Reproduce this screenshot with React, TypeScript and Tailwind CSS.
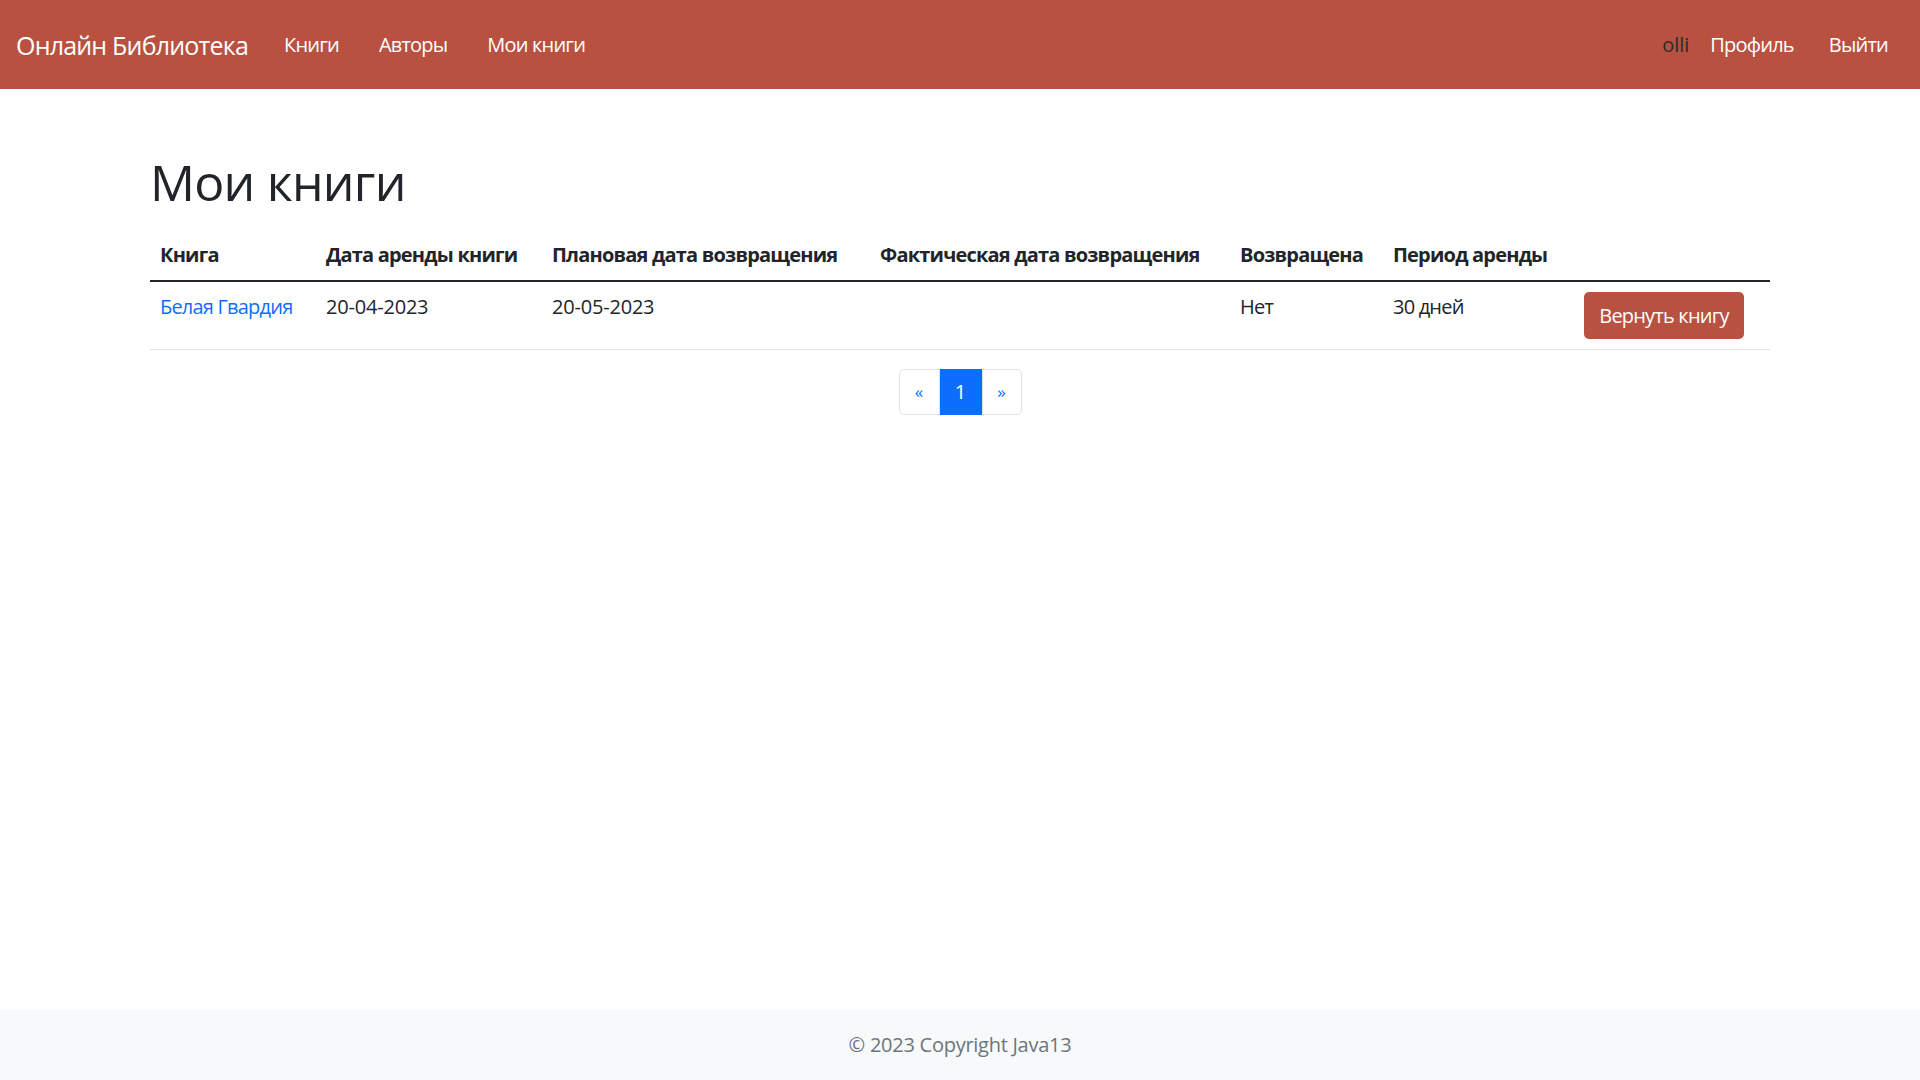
import React from 'react'

const navLinks = ['Книги', 'Авторы', 'Мои книги']

const rows = [
  {
    title: 'Белая Гвардия',
    rentDate: '20-04-2023',
    planned: '20-05-2023',
    actual: '',
    returned: 'Нет',
    period: '30 дней',
  },
]

const App: React.FC = () => {
  return (
    <div className="min-h-screen flex flex-col bg-white text-[#212529] font-['Open_Sans',sans-serif] text-[20px] tracking-[-0.04em]">
      <nav className="h-[89px] bg-[#b85140] flex items-center pl-[16px] pr-[32px]">
        <a href="#" className="text-[25px] text-white mr-[16px] leading-[36px]">
          Онлайн Библиотека
        </a>
        <ul className="flex items-center">
          {navLinks.map((l) => (
            <li key={l}>
              <a href="#" className="block px-[20px] py-[8px] text-white">
                {l}
              </a>
            </li>
          ))}
        </ul>
        <div className="ml-auto flex items-center">
          <span className="text-[#2b2b2b] mr-[21px] tracking-normal">olli</span>
          <a href="#" className="text-white mr-[35px]">
            Профиль
          </a>
          <a href="#" className="text-white">
            Выйти
          </a>
        </div>
      </nav>

      <main className="flex-1">
        <div className="w-[1620px] mx-auto">
          <h1 className="mt-[63px] text-[50px] leading-[60px] font-medium tracking-[-0.015em]">Мои книги</h1>
          <table className="mt-[18px] w-full border-collapse align-top whitespace-nowrap">
            <thead>
              <tr className="border-b-2 border-[#212529]">
                <th className="w-[166px] p-[10px] text-left font-bold leading-[30px]">Книга</th>
                <th className="w-[226px] p-[10px] text-left font-bold leading-[30px]">Дата аренды книги</th>
                <th className="w-[328px] p-[10px] text-left font-bold leading-[30px]">Плановая дата возвращения</th>
                <th className="w-[360px] p-[10px] text-left font-bold leading-[30px]">Фактическая дата возвращения</th>
                <th className="w-[153px] p-[10px] text-left font-bold leading-[30px]">Возвращена</th>
                <th className="w-[191px] p-[10px] text-left font-bold leading-[30px]">Период аренды</th>
                <th className="w-[196px] p-[10px]"></th>
              </tr>
            </thead>
            <tbody>
              {rows.map((r) => (
                <tr key={r.title} className="border-b border-[#dee2e6]">
                  <td className="p-[10px] align-top leading-[30px]">
                    <a href="#" className="text-[#0d6efd]">
                      {r.title}
                    </a>
                  </td>
                  <td className="p-[10px] align-top leading-[30px] tracking-[-0.01em]">{r.rentDate}</td>
                  <td className="p-[10px] align-top leading-[30px] tracking-[-0.01em]">{r.planned}</td>
                  <td className="p-[10px] align-top leading-[30px]">{r.actual}</td>
                  <td className="p-[10px] align-top leading-[30px]">{r.returned}</td>
                  <td className="p-[10px] align-top leading-[30px]">{r.period}</td>
                  <td className="p-[10px] align-top">
                    <button className="h-[47px] w-[160px] rounded-[5px] bg-[#b85140] text-white leading-[30px]">
                      Вернуть книгу
                    </button>
                  </td>
                </tr>
              ))}
            </tbody>
          </table>

          <div className="mt-[19px] flex justify-center tracking-normal">
            <ul className="flex h-[46px]">
              <li>
                <a
                  href="#"
                  className="flex h-full w-[41px] items-center justify-center rounded-l-[5px] border border-[#dee2e6] text-[#0d6efd] text-[17px]"
                >
                  «
                </a>
              </li>
              <li>
                <a
                  href="#"
                  className="flex h-full w-[42px] items-center justify-center border border-[#0d6efd] bg-[#0d6efd] text-white"
                >
                  1
                </a>
              </li>
              <li>
                <a
                  href="#"
                  className="flex h-full w-[40px] items-center justify-center rounded-r-[5px] border border-[#dee2e6] text-[#0d6efd] text-[17px]"
                >
                  »
                </a>
              </li>
            </ul>
          </div>
        </div>
      </main>

      <footer className="h-[70px] bg-[#f8f9fa] flex items-center justify-center text-[#6c757d] tracking-[-0.013em]">
        © 2023 Copyright Java13
      </footer>
    </div>
  )
}

export default App
